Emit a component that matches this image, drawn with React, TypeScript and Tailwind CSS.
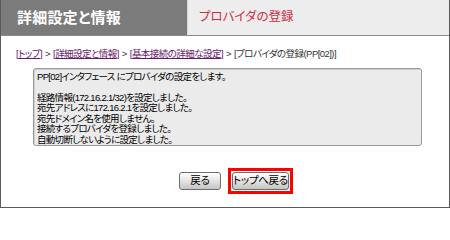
import React from 'react';

const jp = "font-['Liberation_Sans','Noto_Sans_CJK_JP',sans-serif] [font-feature-settings:'palt']";

const Crumb: React.FC<{ label: string }> = ({ label }) => (
  <a href="#" className="text-[#66196a] underline underline-offset-1">
    [{label}]
  </a>
);

const messages = [
  'PP[02]インタフェース にプロバイダの設定をします。',
  '',
  '経路情報(172.16.2.1/32)を設定しました。',
  '宛先アドレスに172.16.2.1を設定しました。',
  '宛先ドメイン名を使用しません。',
  '接続するプロバイダを登録しました。',
  '自動切断しないように設定しました。',
];

const btn =
  'h-[18px] rounded-[3px] border border-[#6e6e6e] bg-gradient-to-b from-[#ffffff] via-[#e4e4e4] to-[#c4c4c4] text-[10.5px] leading-none text-black flex items-center justify-center whitespace-nowrap px-0 tracking-[-0.3px]';

export default function App() {
  return (
    <div className={`w-[450px] h-[208px] bg-white border-x border-b border-[#5a5a5a] flex flex-col ${jp}`}>
      {/* Header */}
      <div className="flex h-[36px] border-b border-[#8a8a8a] shrink-0">
        <div className="w-[187px] bg-[#7b7b7b] border-r border-[#d8d8d8] flex items-center pl-[16px]">
          <span className="text-white font-bold text-[15px] leading-none tracking-[0.2px]">詳細設定と情報</span>
        </div>
        <div className="flex-1 bg-[#ededed] flex items-center pl-[11px]">
          <span className="text-[#d02c45] text-[12.5px] leading-none">プロバイダの登録</span>
        </div>
      </div>

      {/* Breadcrumb */}
      <div className="pl-[15px] pt-[13px] text-[9.5px] leading-none tracking-[-0.55px] text-[#333] flex gap-[3px] items-center whitespace-nowrap">
        <Crumb label="トップ" />
        <span>&gt;</span>
        <Crumb label="詳細設定と情報" />
        <span>&gt;</span>
        <Crumb label="基本接続の詳細な設定" />
        <span>&gt;</span>
        <span>[プロバイダの登録(PP[02])]</span>
      </div>

      {/* Message */}
      <div className="ml-[32px] mt-[9px] w-[389px] h-[78px] rounded-[3px] border border-[#9a9a9a] bg-[#ebebeb] px-[3px] pt-[3px] shadow-[inset_1px_1px_0_#d0d0d0] text-[9.5px] leading-[10.5px] tracking-[-0.7px] text-black whitespace-nowrap">
        {messages.map((m, i) => (
          <React.Fragment key={i}>
            {m}
            <br />
          </React.Fragment>
        ))}
      </div>

      {/* Buttons */}
      <div className="flex justify-center items-center gap-[7px] mt-[22px] pl-[22px]">
        <button className={`w-[42px] ${btn}`}>戻る</button>
        <div className="border-[3px] border-[#ff0000] p-px">
          <button className={`w-[57px] ${btn}`}>トップへ戻る</button>
        </div>
      </div>
    </div>
  );
}
